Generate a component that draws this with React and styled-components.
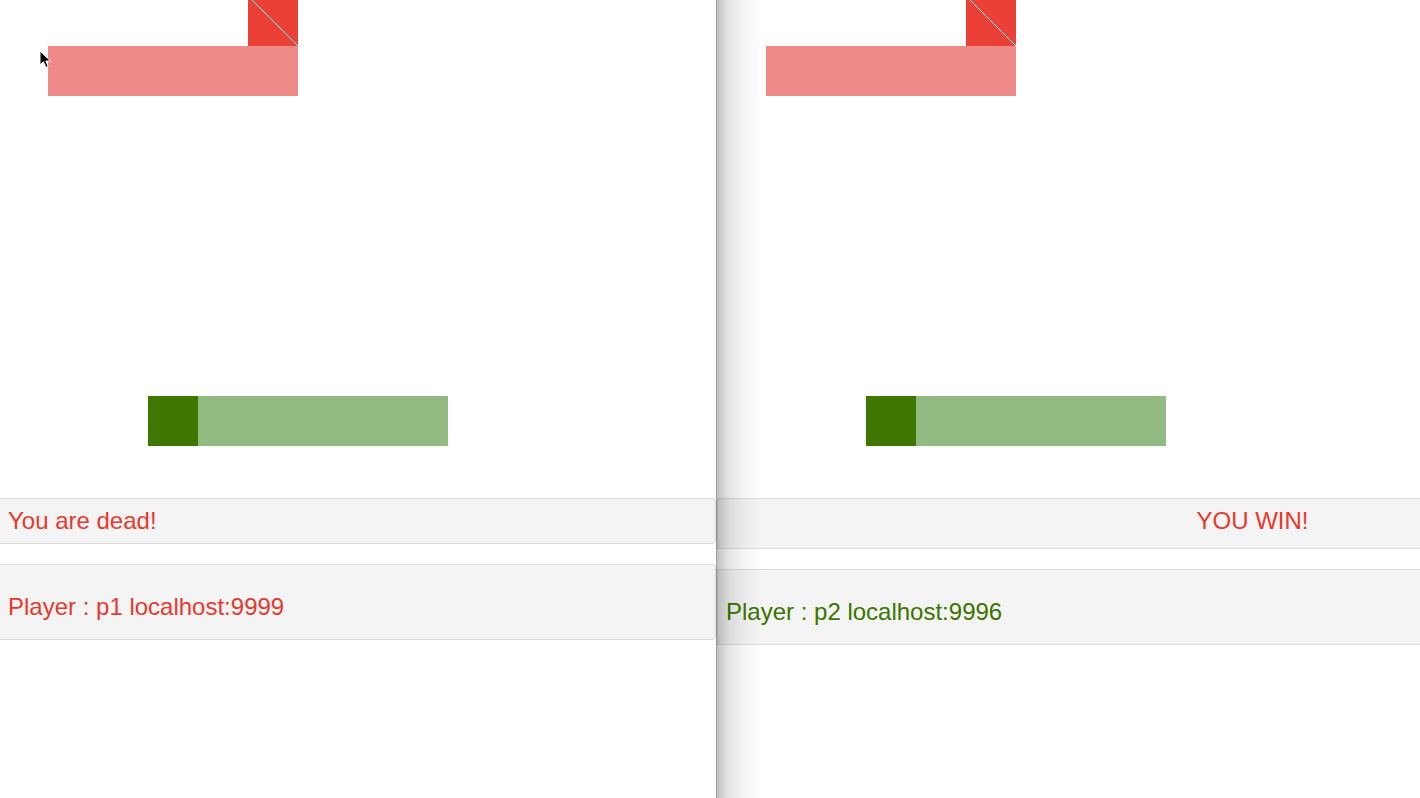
import styled, { createGlobalStyle } from "styled-components";

const GlobalStyle = createGlobalStyle`
  html, body {
    margin: 0;
    padding: 0;
    background: #fff;
    font-family: "Liberation Sans", Arial, Helvetica, sans-serif;
  }
`;

const CELL = 50;

// two game windows, same game seen from each player
const games = [
  {
    id: "p1",
    width: 716,
    offsetX: -2,
    status: "You are dead!",
    statusAlign: "left",
    statusHeight: 46,
    player: "Player : p1 localhost:9999",
    playerColor: "#e8392f",
  },
  {
    id: "p2",
    width: 1070,
    offsetX: -1,
    status: "YOU WIN!",
    statusAlign: "center",
    statusHeight: 51,
    player: "Player : p2 localhost:9996",
    playerColor: "#3b7500",
  },
];

const snakes = [
  {
    head: "#ea4035",
    body: "#ee8a87",
    split: true,
    cells: [
      [5, 0, true],
      [1, 1],
      [2, 1],
      [3, 1],
      [4, 1],
      [5, 1],
    ],
  },
  {
    head: "#3d7700",
    body: "#92bb82",
    split: false,
    cells: [
      [3, 8, true],
      [4, 8],
      [5, 8],
      [6, 8],
      [7, 8],
      [8, 8],
    ],
  },
];

const Screen = styled.div`
  display: flex;
  width: 100vw;
  height: 798px;
  overflow: hidden;
`;

const Window = styled.div`
  position: relative;
  display: flex;
  flex-direction: column;
  gap: 20px;
  flex-shrink: 0;
  width: ${(p) => p.$width}px;
  height: 100%;
  background: #fff;
  border-right: ${(p) => (p.$divider ? "1px solid #9a9a9a" : "none")};

  &::after {
    content: "";
    display: ${(p) => (p.$shadow ? "block" : "none")};
    position: absolute;
    top: 0;
    left: 0;
    bottom: 0;
    width: 46px;
    pointer-events: none;
    background: linear-gradient(
      to right,
      rgba(0, 0, 0, 0.24),
      rgba(0, 0, 0, 0.1) 12px,
      rgba(0, 0, 0, 0.03) 30px,
      rgba(0, 0, 0, 0)
    );
  }
`;

const Board = styled.div`
  position: relative;
  flex-shrink: 0;
  height: 498px;
  margin-bottom: -20px;
  overflow: hidden;
`;

const Cell = styled.div`
  position: absolute;
  width: ${CELL}px;
  height: ${CELL}px;
  background: ${(p) => p.$color};
`;

const Panel = styled.div`
  box-sizing: border-box;
  flex-shrink: 0;
  margin-left: ${(p) => (p.$cut ? "-4px" : "0")};
  padding: ${(p) => p.$pad};
  padding-left: ${(p) => (p.$cut ? "11px" : "8px")};
  height: ${(p) => p.$height}px;
  background: #f4f4f4;
  border: 1px solid #dcdcdc;
  border-radius: 0 4px 4px 0;
  font-size: 24px;
  line-height: 34px;
  color: ${(p) => p.$color};
  text-align: ${(p) => p.$align};
  white-space: nowrap;
`;

const Cursor = styled.svg`
  position: absolute;
  left: 39px;
  top: 50px;
`;

const Head = ({ x, y, color, split }) => (
  <Cell $color={color} style={{ left: x, top: y }}>
    {split && (
      <svg width={CELL} height={CELL} style={{ display: "block" }}>
        <line x1="0" y1="0" x2={CELL} y2={CELL} stroke="#fff" strokeWidth="1" />
      </svg>
    )}
  </Cell>
);

const Game = ({ game, index }) => (
  <Window $width={game.width} $divider={index === 0} $shadow={index === 1}>
    <Board>
      {snakes.map((snake, si) =>
        snake.cells.map(([c, r, isHead], ci) => {
          const x = c * CELL + game.offsetX;
          const y = r * CELL - 4;
          return isHead ? (
            <Head
              key={`${si}-${ci}`}
              x={x}
              y={y}
              color={snake.head}
              split={snake.split}
            />
          ) : (
            <Cell
              key={`${si}-${ci}`}
              $color={snake.body}
              style={{ left: x, top: y }}
            />
          );
        })
      )}
    </Board>
    <Panel
      $cut={index === 0}
      $height={game.statusHeight}
      $pad="5px 7px"
      $align={game.statusAlign}
      $color="#e8392f"
    >
      {game.status}
    </Panel>
    <Panel
      $cut={index === 0}
      $height={76}
      $pad="25px 7px 15px"
      $align="left"
      $color={game.playerColor}
    >
      {game.player}
    </Panel>
    {index === 0 && (
      <Cursor width="13" height="19" viewBox="0 0 13 19">
        <path
          d="M1 1 L1 15 L4.5 11.8 L7 17.5 L9.2 16.5 L6.8 11 L11.5 11 Z"
          fill="#000"
          stroke="#fff"
          strokeWidth="1"
          strokeLinejoin="round"
        />
      </Cursor>
    )}
  </Window>
);

export default function App() {
  return (
    <>
      <GlobalStyle />
      <Screen>
        {games.map((g, i) => (
          <Game key={g.id} game={g} index={i} />
        ))}
      </Screen>
    </>
  );
}
